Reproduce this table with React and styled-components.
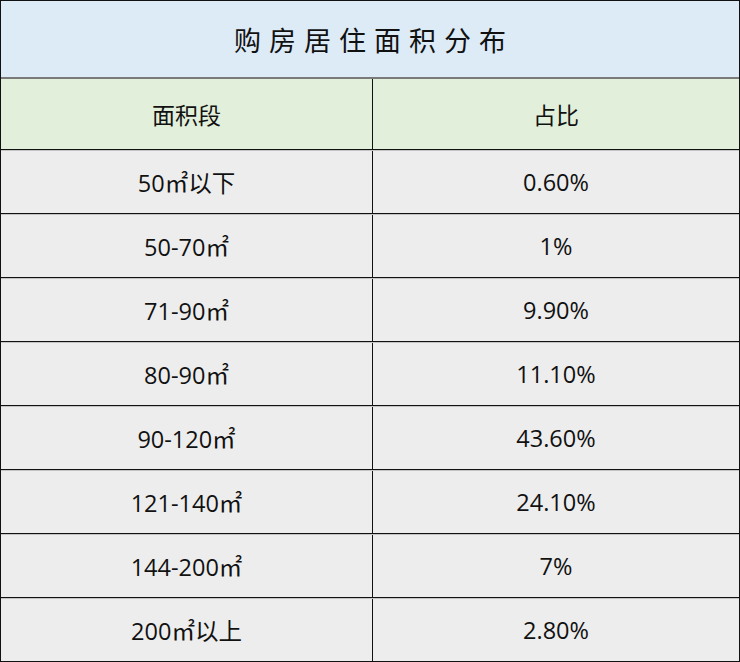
import React from "react";
import styled, { createGlobalStyle } from "styled-components";

const Global = createGlobalStyle`
  html, body { margin: 0; padding: 0; background: #ffffff; }
  body { font-family: "Open Sans", "Noto Sans CJK SC", sans-serif; }
`;

const Table = styled.div`
  width: 740px;
  height: 662px;
  box-sizing: border-box;
  border: 1px solid #111111;
  display: flex;
  flex-direction: column;
  overflow: hidden;
  color: #111111;
`;

const Title = styled.div`
  height: 76px;
  flex: none;
  background: #ddebf7;
  border-bottom: 2px solid #7a7a7a;
  display: flex;
  align-items: center;
  justify-content: center;
  font-family: "Noto Sans CJK SC", sans-serif;
  font-size: 27px;
  letter-spacing: 8px;
  padding-left: 8px;
`;

const Row = styled.div`
  flex: none;
  display: grid;
  grid-template-columns: 371px 1fr;
  height: ${(p) => (p.$header ? "70px" : "62px")};
  background: ${(p) => (p.$header ? "#e2efda" : "#ededed")};
  border-top: ${(p) => (p.$header ? "none" : "1px solid #c4c4c4")};
  border-bottom: ${(p) => (p.$last ? "none" : "1px solid #111111")};
`;

const Cell = styled.div`
  display: flex;
  align-items: center;
  justify-content: center;
  font-size: ${(p) => (p.$cjk ? "23px" : "23.5px")};
  font-family: ${(p) =>
    p.$cjk ? `"Noto Sans CJK SC", sans-serif` : `"Open Sans", "Noto Sans CJK SC", sans-serif`};
  & + & {
    border-left: 1px solid #111111;
  }
`;

const rows = [
  ["50㎡以下", "0.60%"],
  ["50-70㎡", "1%"],
  ["71-90㎡", "9.90%"],
  ["80-90㎡", "11.10%"],
  ["90-120㎡", "43.60%"],
  ["121-140㎡", "24.10%"],
  ["144-200㎡", "7%"],
  ["200㎡以上", "2.80%"],
];

export default function App() {
  return (
    <>
      <Global />
      <Table>
        <Title>购房居住面积分布</Title>
        <Row $header>
          <Cell $cjk>面积段</Cell>
          <Cell $cjk>占比</Cell>
        </Row>
        {rows.map(([a, b], i) => (
          <Row key={a} $last={i === rows.length - 1}>
            <Cell>{a}</Cell>
            <Cell>{b}</Cell>
          </Row>
        ))}
      </Table>
    </>
  );
}
